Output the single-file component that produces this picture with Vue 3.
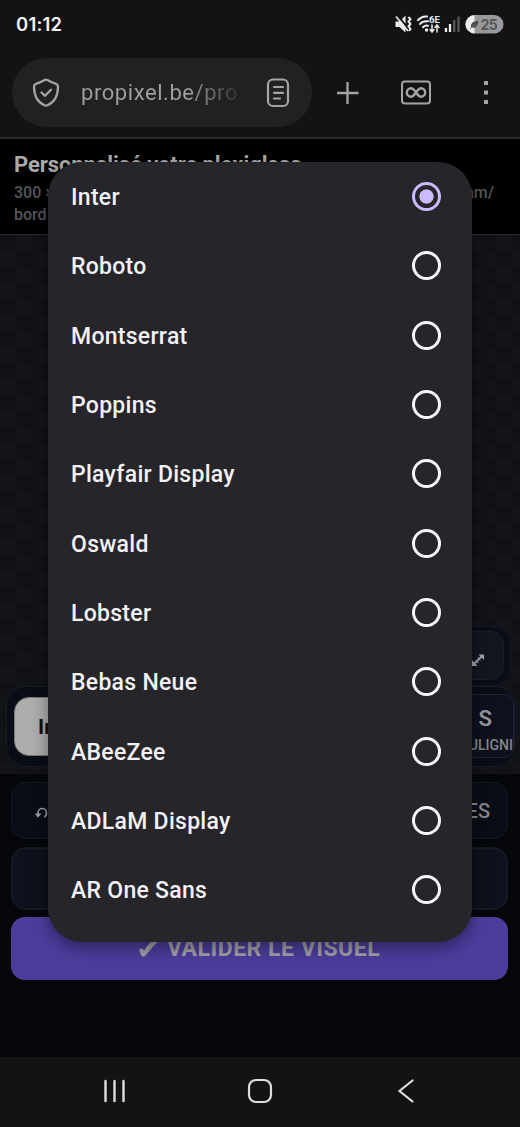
<script setup>
const fonts = ['Inter', 'Roboto', 'Montserrat', 'Poppins', 'Playfair Display', 'Oswald', 'Lobster', 'Bebas Neue', 'ABeeZee', 'ADLaM Display', 'AR One Sans']
const selected = 'Inter'
</script>

<template>
  <div class="phone">
    <div class="status">
      <span class="clock">01:12</span>
      <svg class="status-icons" width="112" height="24" viewBox="0 0 112 24">
        <path d="M1.500 9.500h4l6-6v17l-6-5.500h-4z" fill="#ececee" />
        <path d="M3.500 3l11 14" stroke="#131215" stroke-width="2" />
        <path d="M2 4.500l12 14.500" stroke="#ececee" stroke-width="1.700" />
        <path d="M14.500 5l2 2.300-2 2.300 2 2.400-2 2.300 2 2.700-1.500 2" fill="none" stroke="#ececee" stroke-width="2" />
        <g fill="none" stroke="#ececee" stroke-width="2" stroke-linecap="round">
          <path d="M24 8c3-3 6-4 9-3.500M26 12c2-2.500 4-3 8-2.700M29 15.200c1.500-1.500 3-2 5-1.500" />
          <path d="M38 13v7M36 17.500l2 2.500 2-2.500M43 20v-7M41 15.500l2-2.500 2 2.500" stroke-width="1.500" />
        </g>
        <circle cx="32.500" cy="18" r="1.700" fill="#ececee" />
        <text x="35" y="11" class="band">6E</text>
        <path d="M52 16v4M56 12v8" stroke="#ececee" stroke-width="2.300" />
        <path d="M60.200 8v12M64.500 4.500V20" stroke="#58575a" stroke-width="2.300" />
        <clipPath id="pill"><rect x="71.500" y="3" width="38" height="18.500" rx="9.250" /></clipPath>
        <g clip-path="url(#pill)">
          <rect x="71" y="3" width="39" height="19" fill="#9a9a9c" />
          <rect x="71" y="3" width="9.500" height="19" fill="#eeeeef" />
        </g>
        <path d="M77 15c-.5-4 2.500-6 7.500-6-.5 5-3 7.500-6.500 6.500z" fill="#4c4c4e" />
        <path d="M76 16.500l6-4.500" stroke="#6b6b6d" stroke-width="1" />
        <text x="86.500" y="17.500" class="charge">25</text>
      </svg>
    </div>

    <div class="browser">
      <div class="address">
        <svg width="30" height="32" viewBox="0 0 30 32" fill="none" stroke="#a5a4a7" stroke-width="2.300" stroke-linecap="round" stroke-linejoin="round">
          <path d="M13.600 3.100Q15 2.300 16.400 3.100C19.500 5 22 6 25 6.800Q27 7.500 27 9.500C27 19 24 25 16.500 28.200Q15 28.900 13.500 28.200C6 25 3 19 3 9.500Q3 7.500 5 6.800C8 6 10.500 5 13.600 3.100Z" />
          <path d="M10.500 15.500l3.500 3.300 6-6" />
        </svg>
        <span class="url">propixel.be/pro</span>
        <svg class="reader" width="24" height="30" viewBox="0 0 24 30" fill="none" stroke="#a5a4a7" stroke-width="2.200" stroke-linecap="round">
          <rect x="2" y="1.500" width="20" height="26.500" rx="5" />
          <path d="M8 9h9M8 14.800h9M8 20.500h6" />
        </svg>
      </div>
      <svg class="tools" width="160" height="32" viewBox="0 0 160 32" fill="none" stroke="#a5a4a7" stroke-width="2.300">
        <path d="M1 17h21.500M11.500 6v22" />
        <rect x="66" y="5.500" width="28" height="22" rx="3" stroke-width="2" />
        <path d="M80 16.500c-2-3-3.200-4.200-5-4.200a4.200 4.200 0 0 0 0 8.400c1.800 0 3-1.200 5-4.200s3.200-4.200 5-4.200a4.200 4.200 0 0 1 0 8.400c-1.800 0-3-1.200-5-4.200z" stroke-width="2.400" />
        <path d="M148 5h4v4h-4zM148 14.500h4v4h-4zM148 24h4v4h-4z" fill="#a5a4a7" stroke="none" />
      </svg>
    </div>

    <div class="heading">
      <h1>Personnalisé votre plexiglass</h1>
      <p><span>300 ×</span><span>mm/</span></p>
      <p>bord</p>
    </div>

    <div class="canvas">
      <div class="floating">
        <div class="resize">
          <svg width="14" height="14" viewBox="0 0 14 14" fill="#a3a4aa" stroke="#a3a4aa">
            <path d="M3 11l8-8" stroke-width="1.800" />
            <path d="M7.500 1.500H13V7zM1 7v6h5.500z" stroke="none" />
            <path d="M4.500 7l3 3M6.500 4.500l3 3" stroke-width="1" />
          </svg>
        </div>
      </div>
      <div class="formatting">
        <div class="font-pick">Inter</div>
        <div class="underline"><b>S</b><span>SOULIGNI</span></div>
      </div>
    </div>

    <div class="actions">
      <div class="action-row">
        <div class="action undo">
          <svg width="14" height="12" viewBox="0 0 14 12" fill="none" stroke="#a0a1a6" stroke-width="1.500">
            <path d="M3 8V6a4.200 4.200 0 0 1 8.400-.5c.2 2-.4 3.500-2 4.500" />
            <path d="M0 6.500h6.500L3 10.800z" fill="#a0a1a6" stroke="none" />
          </svg>
        </div>
        <div class="action layers">CALQUES</div>
      </div>
      <div class="action wide"></div>
      <div class="submit"><svg width="21" height="20" viewBox="0 0 21 20"><path d="M0 11c2-2 4-2 5 1C9 5 13 1 18 0l3 1C15 6 11 11 7 16c-2 2-4 2-5 0-1-3-1-3-2-5z" fill="#a3a1a8" /></svg><span>VALIDER LE VISUEL</span></div>
    </div>

    <div class="system-nav">
      <svg width="24" height="24" viewBox="0 0 24 24" stroke="#dededf" stroke-width="2.400" stroke-linecap="round"><path d="M2.500 2v20M11.500 2v20M20.500 2v20" /></svg>
      <svg class="home" width="26" height="26" viewBox="0 0 26 26"><rect x="2" y="2" width="22" height="22" rx="7" fill="none" stroke="#dededf" stroke-width="2.200" /></svg>
      <svg width="20" height="26" viewBox="0 0 20 26"><path d="M16.500 2.500L3.500 13l13 10.500" fill="none" stroke="#dededf" stroke-width="2.200" stroke-linecap="round" /></svg>
    </div>

    <div class="dialog">
      <div v-for="name in fonts" :key="name" class="option">
        <span>{{ name }}</span>
        <i class="radio" :class="{ on: name === selected }"></i>
      </div>
    </div>
  </div>
</template>

<style>
body { background: #131215; }
</style>

<style scoped>
* { box-sizing: border-box; }
.phone { position: relative; width: 520px; height: 1127px; overflow: hidden; display: flex; flex-direction: column; background: #131215; font-family: Roboto, "Liberation Sans", sans-serif; }
svg { display: block; flex: none; }
.status { height: 50px; display: flex; align-items: center; justify-content: space-between; padding: 0 14px 2px 16px; }
.clock { font: 600 18.5px Inter, sans-serif; color: #f3f3f4; letter-spacing: .2px; }
.band { font: 700 9.500px Roboto, sans-serif; fill: #ececee; }
.charge { font: 700 14px Inter, sans-serif; fill: #565658; letter-spacing: -.5px; }
.browser { height: 89px; display: flex; align-items: flex-start; padding: 8px 13px 0 12px; border-bottom: 2px solid #292829; }
.address { width: 300px; height: 69px; border-radius: 35px; background: #212123; display: flex; align-items: center; padding: 1px 22px 0 19px; }
.url { width: 160px; margin-left: 20px; font-size: 22px; letter-spacing: .56px; line-height: 30px; white-space: nowrap; color: transparent; background: linear-gradient(90deg, #a0a0a2 105px, #2d2d2f 160px); background-clip: text; -webkit-background-clip: text; }
.reader { margin-left: auto; }
.tools { margin: 18px 0 0 24px; }
.heading { height: 96px; padding: 15px 26px 0 14px; background: #000; border-bottom: 1px solid #292a2d; overflow: hidden; }
h1 { margin: 0; font-size: 22px; line-height: 22px; font-weight: 700; color: #aaa; letter-spacing: -.1px; white-space: nowrap; }
p { display: flex; justify-content: space-between; margin: 0; font-size: 16px; line-height: 22px; font-weight: 500; color: #55565b; }
h1 + p { margin-top: 6px; }
.canvas { height: 539px; display: flex; flex-direction: column; align-items: flex-end; justify-content: flex-end; padding: 0 5px 7px; background-color: #101216; background-image: conic-gradient(#121418 25%, transparent 0 50%, #121418 0 75%, transparent 0); background-size: 32px 32px; }
.floating { width: 150px; height: 60px; margin-right: 4px; padding: 4px 6px 5px; border: 1px solid #141923; border-radius: 18px; background: #090d15; }
.resize { height: 49px; border: 1px solid #191e28; border-radius: 13px; background: #12161e; display: flex; align-items: center; justify-content: flex-end; padding: 8px 18px 0 0; }
.formatting { width: 509px; height: 81px; display: flex; justify-content: space-between; align-items: center; padding: 0 0 0 7px; border: 1px solid #161b26; border-radius: 20px; background: #090d15; overflow: hidden; }
.font-pick { width: 116px; height: 59px; border-radius: 15px; padding: 0 0 0 23px; background: #adadad; border: 1px solid #77787b; color: #111217; font-size: 21px; font-weight: 700; line-height: 58px; }
.underline { width: 60px; height: 64px; border: 1px solid #202534; border-radius: 0 10px 10px 0; background: #0d111d; display: flex; flex-direction: column; align-items: flex-end; justify-content: center; margin-top: -1px; color: #85868f; font-size: 14px; font-weight: 500; }
.underline b { font-size: 22px; line-height: 28px; font-weight: 600; margin: 12px 21px 0 0; color: #94959d; }
.underline span { margin: 1px 0 3px; line-height: 23px; }
.actions { height: 283px; padding: 8px 12px 0 11px; background: #05070b; display: flex; flex-direction: column; gap: 8px; }
.action-row { display: flex; gap: 8px; height: 57px; }
.action { border: 1px solid #121823; border-radius: 15px; background: #090d15; display: flex; align-items: center; color: #84868c; font-size: 20px; font-weight: 500; }
.undo { width: 180px; padding: 4px 0 0 23px; }
.layers { flex: 1; justify-content: flex-end; padding-right: 17px; }
.wide { height: 63px; border: 2px solid #151923; background: #0e111b; }
.submit { height: 63px; margin-top: -1px; border-radius: 14px; background: #4b3d9c; display: flex; align-items: center; justify-content: center; gap: 7px; color: #a3a1a8; font-size: 23px; font-weight: 700; letter-spacing: .5px; }
.system-nav { height: 70px; background: #131215; display: flex; align-items: center; padding: 0 104px 2px 103px; justify-content: space-between; }
.home { margin-right: 4px; }
.dialog { position: absolute; left: 48px; top: 162px; width: 424px; height: 780px; border-radius: 34px; background: #26252a; box-shadow: 0 6px 16px rgba(0, 0, 0, .4); }
.option { height: 69.33px; display: flex; align-items: center; justify-content: space-between; padding: 0 31px 0 23px; color: #f3f1f5; font-size: 23px; font-weight: 500; letter-spacing: .28px; white-space: nowrap; }
.option span { padding-top: 2px; }
.radio { width: 29px; height: 29px; border: 3px solid #f8f7fa; border-radius: 50%; }
.radio.on { border-color: #cbbaff; background: radial-gradient(circle, #cbbaff 0 6.800px, transparent 7.400px); }
</style>
